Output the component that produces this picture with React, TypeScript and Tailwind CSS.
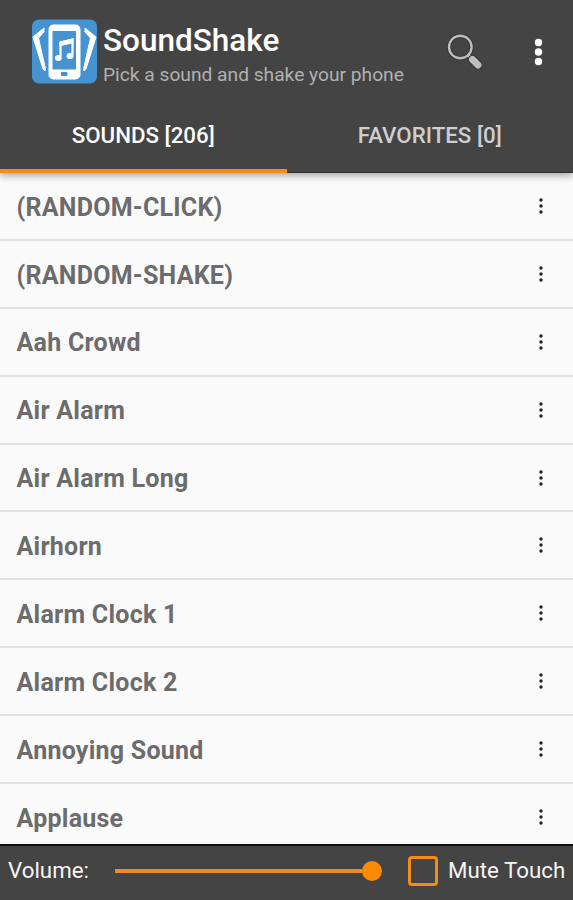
const sounds = [
  '(RANDOM-CLICK)',
  '(RANDOM-SHAKE)',
  'Aah Crowd',
  'Air Alarm',
  'Air Alarm Long',
  'Airhorn',
  'Alarm Clock 1',
  'Alarm Clock 2',
  'Annoying Sound',
  'Applause',
];

function Logo() {
  return (
    <svg className="h-[65px] w-[65px] shrink-0" viewBox="0 0 65 65">
      <rect y="0.500" width="65" height="64" rx="7" fill="#4693d2" />
      <path d="M1 18 12 9 12 13 6.500 19 13.500 50 13 52 11 50Z" fill="#fff" stroke="#fff" strokeLinejoin="round" />
      <path d="M64 18 53 9 53 13 58.500 19 51.500 50 52 52 54 50Z" fill="#fff" stroke="#fff" strokeLinejoin="round" />
      <rect x="16.500" y="5.500" width="32" height="55" rx="5" fill="#fff" />
      <rect x="20.500" y="12" width="23.500" height="38.500" fill="#4693d2" />
      <rect x="29" y="53" width="6.500" height="4" rx="1" fill="#4693d2" />
      <path d="M28.500 38V23.500L40.500 20.500V35.500" fill="none" stroke="#fff" strokeWidth="2.200" />
      <path d="M27.500 22.500 41.500 19.500V24L27.500 27.500Z" fill="#fff" />
      <ellipse cx="26.300" cy="39" rx="3.400" ry="3" fill="#fff" />
      <ellipse cx="38" cy="37" rx="3.400" ry="3" fill="#fff" />
    </svg>
  );
}

function SearchIcon() {
  return (
    <svg className="h-9 w-9" viewBox="0 0 36 36" fill="none">
      <circle cx="13.300" cy="14" r="11.300" stroke="#333" strokeWidth="4.200" />
      <circle cx="13.300" cy="14" r="11.300" stroke="#bdbdbd" strokeWidth="2.400" />
      <path d="M20.500 21.500 24 25" stroke="#bdbdbd" strokeWidth="3" />
      <path d="M25.500 26.500 31 32" stroke="#333" strokeWidth="9" strokeLinecap="round" />
      <path d="M25.500 26.500 31 32" stroke="#bdbdbd" strokeWidth="7" strokeLinecap="round" />
    </svg>
  );
}

function RowMenu() {
  return (
    <svg className="h-[18px] w-2" viewBox="0 0 8 18" fill="#222">
      <circle cx="4" cy="3" r="1.700" />
      <circle cx="4" cy="9" r="1.700" />
      <circle cx="4" cy="15" r="1.700" />
    </svg>
  );
}

export default function App() {
  return (
    <div className="flex h-[900px] w-[573px] flex-col overflow-hidden bg-[#fafafa] font-['Roboto',sans-serif]">
      <header className="z-10 flex h-[173px] shrink-0 flex-col bg-[#444] shadow-[0_2px_8px_rgba(0,0,0,0.4)]">
        <div className="flex h-[102px] shrink-0 pl-8">
          <div className="pt-[19px]">
            <Logo />
          </div>
          <div className="w-[351px] pt-[22px] pl-[6px] whitespace-nowrap">
            <h1 className="h-[37px] text-[31.500px] leading-[37px] font-medium text-white">
              <span>SoundShake</span>
            </h1>
            <p className="h-[32px] text-[19.200px] leading-[32px] text-[#b0b0b0]">
              <span>Pick a sound and shake your phone</span>
            </p>
          </div>
          <button className="mt-[33px] ml-[-1px] h-9 w-9">
            <SearchIcon />
          </button>
          <button className="mt-[36px] ml-[49px] h-8 w-3">
            <svg className="h-8 w-3" viewBox="0 0 12 32" fill="#fff">
              <circle cx="6.500" cy="6.500" r="3.700" />
              <circle cx="6.500" cy="16" r="3.700" />
              <circle cx="6.500" cy="25.500" r="3.700" />
            </svg>
          </button>
        </div>
        <nav className="grid flex-1 grid-cols-2 text-[22.300px] leading-[26px] font-medium whitespace-nowrap">
          <button className="flex items-start justify-center border-b-4 border-[#f58b1c] pt-[20px] text-white">
            <span>SOUNDS [206]</span>
          </button>
          <button className="flex items-start justify-center border-b border-[#333] pt-[20px] text-[#cecece]">
            <span>FAVORITES [0]</span>
          </button>
        </nav>
      </header>
      <main className="h-[671px] shrink-0 overflow-hidden">
        <ul>
          {sounds.map((sound) => (
            <li
              key={sound}
              className="flex h-[67.900px] items-center justify-between border-b-2 border-[#e2e2e2] pr-[28px] pl-[16.500px] text-[25px] font-bold tracking-[0.250px] whitespace-nowrap text-[#6c6c6c]"
            >
              <span className="pt-[3px]">{sound}</span>
              <button className="h-[18px] w-2">
                <RowMenu />
              </button>
            </li>
          ))}
        </ul>
      </main>
      <footer className="flex h-14 shrink-0 items-center border-t-2 border-[#111] bg-[#444] pb-[4px] pl-2 text-[22.300px] whitespace-nowrap text-[#f5f5f5]">
        <span className="w-[107px]">Volume:</span>
        <div className="flex w-[267px] items-center">
          <div className="h-[4px] flex-1 bg-[#ed8c23]" />
          <div className="h-5 w-5 rounded-full bg-[#ff8c00]" />
        </div>
        <div className="ml-[26px] h-[30px] w-[30px] rounded-[4px] border-[3.500px] border-[#f58b1c]" />
        <span className="ml-[10px]">Mute Touch</span>
      </footer>
    </div>
  );
}
